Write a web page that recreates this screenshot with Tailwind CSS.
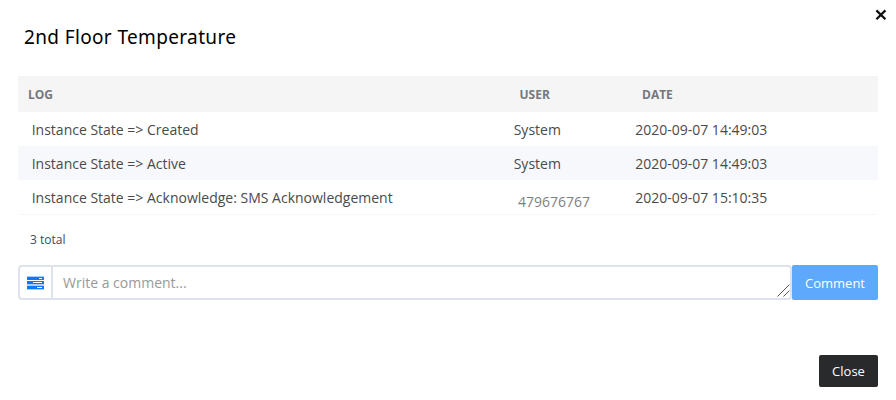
<!DOCTYPE html>
<html lang="en">
<head>
<meta charset="utf-8">
<title>2nd Floor Temperature</title>
<script src="https://cdn.jsdelivr.net/npm/@tailwindcss/browser@4"></script>
</head>
<body class="bg-white">
<div class="relative flex h-[400px] w-[896px] flex-col overflow-hidden bg-white pl-[18px] pr-[18px] font-['Open_Sans',sans-serif] text-[14px] text-[#4a4a4a]">
  <button class="absolute left-[875px] top-[9px]" aria-label="Close dialog">
    <svg class="block" width="12" height="12" viewBox="0 0 12 12" stroke="#111" stroke-width="2.3" fill="none"><path d="M1.4 1.4 10.4 10.2M10.4 1.4 1.4 10.2"/></svg>
  </button>
  <h1 class="h-[76px] pl-[6px] pt-[24px] font-['Noto_Sans',sans-serif] text-[19px] leading-[26px] tracking-[0.36px] whitespace-nowrap text-black">2nd Floor Temperature</h1>
  <div class="grid h-9 grid-cols-[491.5px_122.5px_1fr] items-center bg-[#f5f5f5] pl-[10px] pt-[2px] text-[12px] font-bold text-[#74787e]">
    <span>LOG</span><span>USER</span><span>DATE</span>
  </div>
  <div class="grid h-[34px] grid-cols-[482px_121.5px_1fr] items-center pl-[13.7px]">
    <span>Instance State =&gt; Created</span><span>System</span><span>2020-09-07 14:49:03</span>
  </div>
  <div class="grid h-[34px] grid-cols-[482px_121.5px_1fr] items-center bg-[#f7f8fb] pl-[13.7px]">
    <span>Instance State =&gt; Active</span><span>System</span><span>2020-09-07 14:49:03</span>
  </div>
  <div class="grid h-[35px] grid-cols-[482px_121.5px_1fr] items-center border-b border-[#f7f7f7] pl-[13.7px]">
    <span>Instance State =&gt; Acknowledge: SMS Acknowledgement</span><span class="pl-[4.3px] pt-[9px] text-[#7f7f7f]">479676767</span><span>2020-09-07 15:10:35</span>
  </div>
  <div class="flex h-[50px] items-center pl-3 text-[12px] text-[#3e4a5f]">3 total</div>
  <div class="flex h-[35px]">
    <div class="flex w-[35px] items-center justify-center rounded-l-[4px] border-2 border-[#dde2ec]">
      <svg class="block" width="17" height="14" viewBox="0 0 17 14"><path fill="#a9cfff" d="M0 0h17v1H0zM0 8h17v2H0zM0 13h17v1H0z"/><path fill="#0d78f8" d="M0 1h17v3H0zM0 5h17v3H0zM0 10h17v3H0z"/><path fill="#fff" d="M12 2h3v1h-3zM6 6h9v1H6zM10 11h5v1h-5z"/></svg>
    </div>
    <div class="-ml-[2px] flex w-[741px] items-center justify-between rounded-r-[4px] border-2 border-[#dde2ec] pl-[10px] text-[#999]">
      <span>Write a comment...</span>
      <svg class="mb-[1px] block self-end" width="13" height="13" viewBox="0 0 13 13" stroke="#555" fill="none"><path d="M.5 12.5l12-12M6.5 12.5l6-6"/></svg>
    </div>
    <button class="w-[86px] rounded-[2px] bg-[#5ea9fb] pt-[2px] text-[13px] text-white">Comment</button>
  </div>
  <button class="mt-[55px] h-8 w-[59px] self-end rounded-[2px] bg-[#292a2c] pt-[2px] text-[13px] text-white">Close</button>
</div>
</body>
</html>
